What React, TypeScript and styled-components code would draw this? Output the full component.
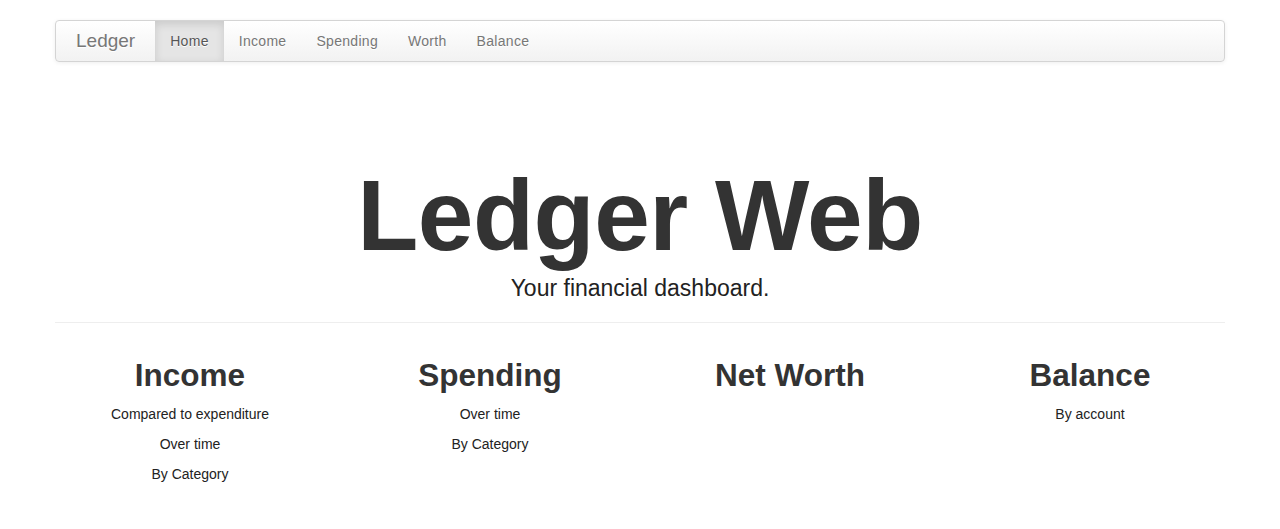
import React from "react";
import styled, { createGlobalStyle } from "styled-components";

const Global = createGlobalStyle`
  html, body { margin: 0; padding: 0; background: #fff; }
  body {
    font-family: "Liberation Sans", Arial, Helvetica, sans-serif;
    font-size: 14px;
    line-height: 20px;
    color: #333;
  }
  * { box-sizing: border-box; }
`;

const Container = styled.div`
  width: 1170px;
  margin: 0 auto;
  padding-top: 20px;
`;

const Navbar = styled.div`
  display: flex;
  align-items: stretch;
  height: 42px;
  padding: 0 20px;
  border: 1px solid #d4d4d4;
  border-radius: 4px;
  background: linear-gradient(to bottom, #ffffff, #f2f2f2);
  box-shadow: 0 1px 4px rgba(0, 0, 0, 0.065);
`;

const Brand = styled.a`
  display: block;
  margin-left: -20px;
  padding: 10px 20px;
  font-size: 19px;
  line-height: 20px;
  font-weight: 200;
  color: #777;
  text-decoration: none;
  text-shadow: 0 1px 0 #fff;
`;

const Nav = styled.ul`
  display: flex;
  margin: 0;
  padding: 0;
  list-style: none;
`;

const NavLink = styled.a<{ $active?: boolean }>`
  display: block;
  padding: 10px 15px;
  font-size: 14px;
  line-height: 20px;
  letter-spacing: 0.3px;
  color: ${(p) => (p.$active ? "#555" : "#777")};
  text-decoration: none;
  text-shadow: 0 1px 0 #fff;
  background: ${(p) => (p.$active ? "#e5e5e5" : "transparent")};
  box-shadow: ${(p) => (p.$active ? "inset 0 3px 8px rgba(0,0,0,0.125)" : "none")};
`;

const Hero = styled.div`
  text-align: center;
  padding-top: 103px;
`;

const Title = styled.h1`
  margin: 0;
  font-size: 100px;
  line-height: 100px;
  font-weight: bold;
  letter-spacing: -0.5px;
  color: #333;
`;

const Lead = styled.p`
  margin: 8px 0 0;
  font-size: 23px;
  line-height: 30px;
  font-weight: 300;
  color: #222;
`;

const Rule = styled.hr`
  margin: 19px 0 0;
  border: 0;
  border-top: 1px solid #eee;
`;

const Row = styled.div`
  display: grid;
  grid-template-columns: repeat(4, 270px);
  column-gap: 30px;
  padding-top: 32px;
`;

const Col = styled.div`
  text-align: center;
`;

const Heading = styled.h2`
  margin: 0 0 9px;
  font-size: 31.5px;
  line-height: 40px;
  font-weight: bold;
  color: #333;
`;

const Item = styled.p`
  margin: 0 0 10px;
  a {
    color: #222;
    text-decoration: none;
  }
`;

const sections: { title: string; items: string[] }[] = [
  { title: "Income", items: ["Compared to expenditure", "Over time", "By Category"] },
  { title: "Spending", items: ["Over time", "By Category"] },
  { title: "Net Worth", items: [] },
  { title: "Balance", items: ["By account"] },
];

export default function App() {
  return (
    <>
      <Global />
      <Container>
        <Navbar>
          <Brand href="#">Ledger</Brand>
          <Nav>
            {["Home", "Income", "Spending", "Worth", "Balance"].map((n, i) => (
              <li key={n}>
                <NavLink href="#" $active={i === 0}>
                  {n}
                </NavLink>
              </li>
            ))}
          </Nav>
        </Navbar>
        <Hero>
          <Title>Ledger Web</Title>
          <Lead>Your financial dashboard.</Lead>
        </Hero>
        <Rule />
        <Row>
          {sections.map((s) => (
            <Col key={s.title}>
              <Heading>{s.title}</Heading>
              {s.items.map((it) => (
                <Item key={it}>
                  <a href="#">{it}</a>
                </Item>
              ))}
            </Col>
          ))}
        </Row>
      </Container>
    </>
  );
}
